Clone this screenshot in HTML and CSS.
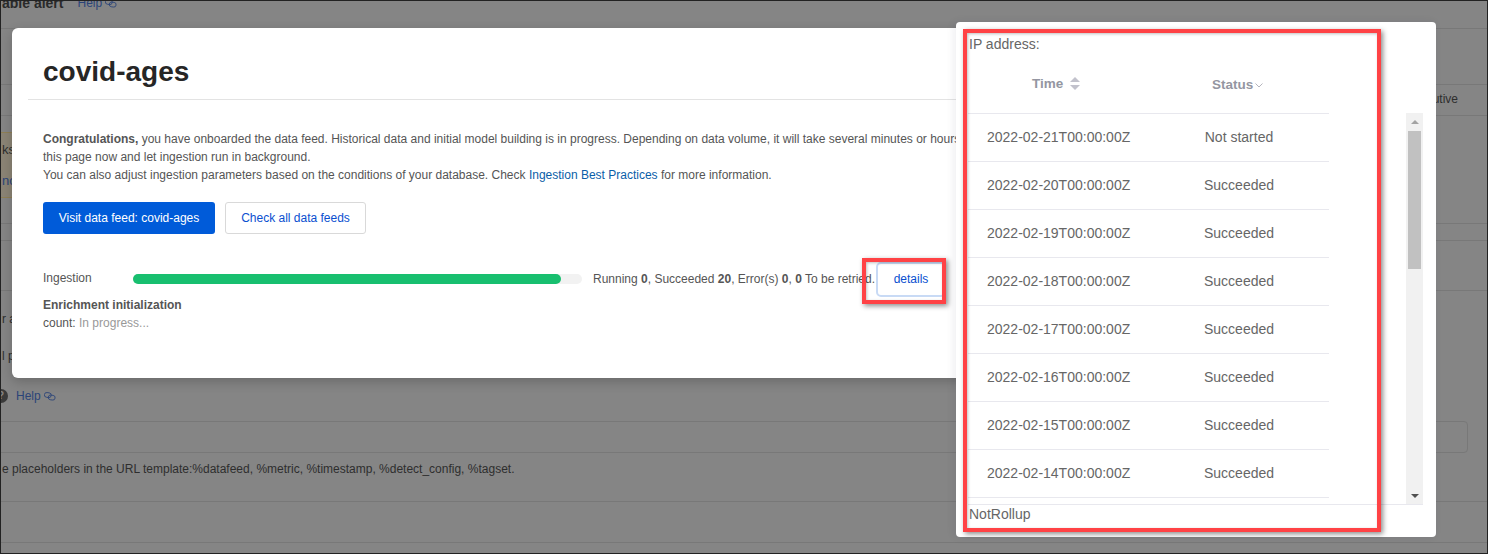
FILE: index.html
```html
<!DOCTYPE html>
<html lang="en">

<head>
    <meta charset="UTF-8">
    <meta name="viewport" content="width=device-width, initial-scale=1.0">
    <title>covid-ages</title>
    <link rel="stylesheet" href="styles.css">
</head>

<body>
    <div class="page">
        <!-- dimmed page behind the modal -->
        <div class="bg-row row-alert">
            <strong>able alert</strong>
            <a class="bg-help">Help
                <svg class="link-icon" viewBox="0 0 14 10"><rect x="0.5" y="0.5" width="8" height="5.5" rx="2.7" transform="rotate(8 4 3)"/><rect x="5" y="3.5" width="8" height="5.5" rx="2.7" transform="rotate(8 9 6)"/></svg>
            </a>
        </div>
        <div class="bg-row row-blank-a"></div>
        <div class="bg-row row-utive"><span>utive</span></div>
        <div class="bg-row row-warning">
            <div class="warning-box">
                <span>ks</span>
                <span class="warning-link">nc</span>
            </div>
        </div>
        <div class="bg-row row-blank-b"></div>
        <div class="bg-row row-blank-c"></div>
        <div class="bg-row row-form">
            <span>r a</span>
            <span>l p</span>
            <div class="form-help">
                <span class="help-dot">?</span>
                <a class="bg-help">Help
                    <svg class="link-icon" viewBox="0 0 14 10"><rect x="0.5" y="0.5" width="8" height="5.5" rx="2.7" transform="rotate(8 4 3)"/><rect x="5" y="3.5" width="8" height="5.5" rx="2.7" transform="rotate(8 9 6)"/></svg>
                </a>
            </div>
        </div>
        <div class="bg-input"></div>
        <div class="bg-row row-hint">e placeholders in the URL template:%datafeed, %metric, %timestamp, %detect_config, %tagset.</div>
        <div class="bg-row row-blank-d"></div>
    </div>

    <div class="modal">
        <h1>covid-ages</h1>
        <div class="modal-body">
            <p class="intro">
                <strong>Congratulations,</strong> you have onboarded the data feed. Historical data and initial model building is in progress. Depending on data volume, it will take several minutes or hours<br>
                this page now and let ingestion run in background.<br>
                You can also adjust ingestion parameters based on the conditions of your database. Check <a>Ingestion Best Practices</a> for more information.
            </p>
            <div class="actions">
                <button class="btn btn-primary">Visit data feed: covid-ages</button>
                <button class="btn btn-default">Check all data feeds</button>
            </div>
            <div class="ingestion">
                <span class="ingestion-label">Ingestion</span>
                <div class="progress"><div class="progress-fill"></div></div>
                <span class="ingestion-stats">Running <b>0</b>, Succeeded <b>20</b>, Error(s) <b>0</b>, <b>0</b> To be retried.</span>
                <button class="btn-details">details</button>
            </div>
            <div class="enrichment">
                <strong>Enrichment initialization</strong>
                <div>count: <span class="muted">In progress...</span></div>
            </div>
        </div>
    </div>

    <div class="drawer-arrow"></div>
    <div class="drawer">
        <div class="drawer-title">IP address:</div>
        <div class="table-head">
            <div class="col-time">Time
                <svg class="sort-icon" viewBox="0 0 10 13"><path d="M5 0 10 5H0Z"/><path d="M5 13 0 8H10Z"/></svg>
            </div>
            <div class="col-status">Status
                <svg class="chevron" viewBox="0 0 8 5"><path d="M0.5 0.5 4 4 7.5 0.5"/></svg>
            </div>
        </div>
        <div class="table-scroll">
            <table class="status-table">
                <tr><td>2022-02-21T00:00:00Z</td><td>Not started</td></tr>
                <tr><td>2022-02-20T00:00:00Z</td><td>Succeeded</td></tr>
                <tr><td>2022-02-19T00:00:00Z</td><td>Succeeded</td></tr>
                <tr><td>2022-02-18T00:00:00Z</td><td>Succeeded</td></tr>
                <tr><td>2022-02-17T00:00:00Z</td><td>Succeeded</td></tr>
                <tr><td>2022-02-16T00:00:00Z</td><td>Succeeded</td></tr>
                <tr><td>2022-02-15T00:00:00Z</td><td>Succeeded</td></tr>
                <tr><td>2022-02-14T00:00:00Z</td><td>Succeeded</td></tr>
            </table>
            <div class="scrollbar">
                <span class="arrow-up"></span>
                <div class="thumb"></div>
                <span class="arrow-down"></span>
            </div>
        </div>
        <div class="drawer-foot">NotRollup</div>
    </div>

    <!-- red annotation boxes drawn over the screenshot -->
    <div class="mark mark-details"></div>
    <div class="mark mark-drawer"></div>
</body>

</html>
```

FILE: styles.css
```css
* {
    box-sizing: border-box;
}

html,
body {
    margin: 0;
    height: 554px;
    overflow: hidden;
}

body {
    position: relative;
    font-family: "Liberation Sans", Arial, sans-serif;
    font-size: 12px;
    color: #2e2e2e;
    background-color: #858585;
}

.page {
    height: 554px;
    border: 1px solid #222;
    overflow: hidden;
    background-color: #858585;
}

.bg-row {
    border-bottom: 1px solid #787878;
}

.row-alert {
    height: 28px;
    padding-left: 1px;
    display: flex;
    gap: 14px;
    align-items: flex-start;
}

.row-alert strong {
    font-size: 14px;
    line-height: 14px;
    margin-top: -5px;
    color: #2a2a2a;
}

.row-alert .bg-help {
    margin-top: -5px;
    line-height: 14px;
}

.bg-help {
    color: #2b4478;
    display: inline-flex;
    align-items: center;
    gap: 3px;
}

.link-icon {
    width: 12px;
    height: 9px;
    fill: none;
    stroke: #2b4478;
    stroke-width: 1;
}

.row-blank-a {
    height: 56px;
}

.row-utive {
    height: 31px;
    text-align: right;
    padding: 7px 29px 0 0;
}

.row-warning {
    height: 108px;
    padding-top: 16px;
}

.warning-box {
    width: 500px;
    height: 66px;
    margin-left: -10px;
    padding: 9px 0 0 10px;
    border: 1px solid #8f7f55;
    background-color: #8b8475;
    display: flex;
    flex-direction: column;
    gap: 15px;
    font-size: 13px;
    line-height: 16px;
}

.warning-link {
    color: #2b4478;
}

.row-blank-b {
    height: 17px;
}

.row-blank-c {
    height: 50px;
}

.row-form {
    height: 130px;
    padding: 21px 0 0 1px;
    border-bottom: none;
    display: flex;
    flex-direction: column;
    gap: 23px;
    line-height: 14px;
}

.form-help {
    display: flex;
    gap: 8px;
    margin-left: -8px;
    margin-top: 3px;
    align-items: center;
}

.help-dot {
    width: 14px;
    height: 14px;
    border-radius: 50%;
    background-color: #3a3a3a;
    color: #858585;
    font-size: 10px;
    font-weight: bold;
    line-height: 14px;
    text-align: center;
}

.bg-input {
    height: 32px;
    width: 1477px;
    margin-left: -10px;
    border: 1px solid #787878;
    border-radius: 4px;
}

.row-hint {
    height: 49px;
    padding: 9px 0 0 1px;
    line-height: 14px;
}

.row-blank-d {
    height: 41px;
}

.modal {
    position: absolute;
    left: 12px;
    top: 28px;
    width: 1000px;
    height: 350px;
    background-color: #fff;
    border-radius: 6px;
    box-shadow: 0 4px 12px rgba(0, 0, 0, 0.2);
    padding: 0 0 0 16px;
}

.modal h1 {
    margin: 0;
    height: 72px;
    padding: 28px 0 0 15px;
    font-size: 28px;
    line-height: 32px;
    color: #262626;
    border-bottom: 1px solid #e3e3e3;
}

.modal-body {
    padding: 30px 0 0 15px;
    color: #555;
}

.intro {
    margin: 0;
    line-height: 18px;
    white-space: nowrap;
}

.intro a {
    color: #0a5ea8;
}

.actions {
    display: flex;
    gap: 10px;
    margin-top: 18px;
}

.btn {
    height: 32px;
    border-radius: 3px;
    font-family: inherit;
    font-size: 12px;
    padding: 0;
}

.btn-primary {
    width: 172px;
    border: none;
    background-color: #005bd9;
    color: #fff;
}

.btn-default {
    width: 141px;
    border: 1px solid #d9d9d9;
    background-color: #fff;
    color: #0a4fd0;
}

.ingestion {
    display: flex;
    align-items: center;
    height: 36px;
    margin-top: 27px;
}

.ingestion-label {
    width: 90px;
    margin-bottom: 2px;
}

.progress {
    width: 449px;
    height: 10px;
    border-radius: 5px;
    background-color: #f2f2f2;
}

.progress-fill {
    width: 428px;
    height: 10px;
    border-radius: 5px;
    background-color: #18bf6f;
}

.ingestion-stats {
    margin-left: 11px;
    width: 283px;
    white-space: nowrap;
}

.btn-details {
    width: 70px;
    height: 35px;
    border: 2px solid #c8daf5;
    border-radius: 5px;
    background-color: #fff;
    color: #0a4fd0;
    font-family: inherit;
    font-size: 12px;
    padding: 0;
}

.enrichment {
    margin-top: -1px;
    line-height: 18px;
}

.muted {
    color: #999;
}

.drawer-arrow {
    position: absolute;
    left: 950px;
    top: 273px;
    border-top: 6px solid transparent;
    border-bottom: 6px solid transparent;
    border-right: 6px solid #fff;
}

.drawer {
    position: absolute;
    left: 956px;
    top: 22px;
    width: 480px;
    height: 515px;
    padding: 14px 13px 0 12px;
    background-color: #fff;
    border-radius: 4px;
    box-shadow: -2px 0 8px rgba(30, 30, 60, 0.08);
    font-size: 14px;
    color: #666;
}

.drawer-title {
    margin-left: 1px;
    line-height: 16px;
    height: 16px;
}

.table-head {
    display: flex;
    width: 361px;
    height: 61px;
    font-weight: bold;
    font-size: 13.5px;
    color: #9496a1;
    padding-top: 24px;
}

.col-time {
    width: 200px;
    padding-left: 64px;
    display: flex;
    gap: 7px;
    align-items: flex-start;
    line-height: 16px;
}

.col-status {
    padding: 1px 0 0 44px;
    display: flex;
    gap: 2px;
    align-items: flex-start;
    line-height: 16px;
}

.sort-icon {
    width: 10px;
    height: 13px;
    margin-top: 1px;
    fill: #c2c2cc;
}

.chevron {
    width: 8px;
    height: 5px;
    margin-top: 6px;
    fill: none;
    stroke: #b5b5bd;
}

.table-scroll {
    display: flex;
    justify-content: space-between;
    height: 392px;
    overflow: hidden;
    border-bottom: 1px solid #e8e8ee;
}

.status-table {
    width: 361px;
    height: 384px;
    border-collapse: collapse;
    border-top: 1px solid #e8e8ee;
}

.status-table tr {
    height: 48px;
    border-bottom: 1px solid #e8e8ee;
}

.status-table td {
    padding: 0 0 2px 19px;
    color: #666;
}

.status-table td:last-child {
    width: 180px;
    padding: 0 0 2px;
    text-align: center;
}

.scrollbar {
    position: relative;
    width: 17px;
    background-color: #f1f1f1;
}

.thumb {
    position: absolute;
    left: 2px;
    top: 18px;
    width: 13px;
    height: 138px;
    background-color: #c1c1c1;
}

.arrow-up,
.arrow-down {
    position: absolute;
    left: 5px;
    border-left: 4px solid transparent;
    border-right: 4px solid transparent;
}

.arrow-up {
    top: 7px;
    border-bottom: 4px solid #a3a3a3;
}

.arrow-down {
    bottom: 6px;
    border-top: 4px solid #505050;
}

.drawer-foot {
    margin-left: 1px;
    padding-top: 1px;
    line-height: 16px;
}

.mark {
    position: absolute;
    border: 4px solid #ff4245;
    box-shadow: 2px 2px 5px rgba(0, 0, 0, 0.45), inset 1px 1px 3px rgba(0, 0, 0, 0.25);
}

.mark-details {
    left: 862px;
    top: 258px;
    width: 84px;
    height: 46px;
}

.mark-drawer {
    left: 963px;
    top: 29px;
    width: 418px;
    height: 503px;
}
```
